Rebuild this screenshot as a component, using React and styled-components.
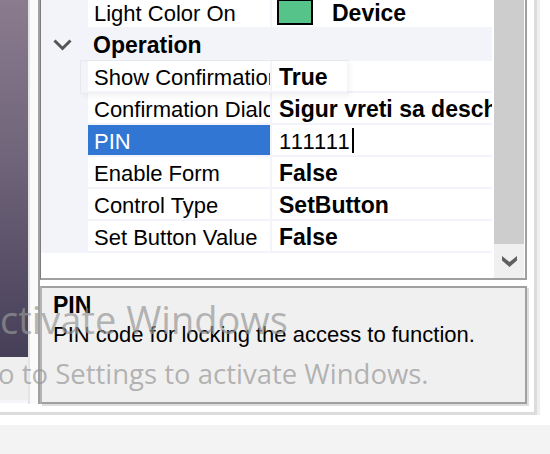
import React from "react";
import styled, { createGlobalStyle, css } from "styled-components";

const LINE = "#f3f4f9";

const Global = createGlobalStyle`
  *, *::before, *::after { box-sizing: border-box; }
  html, body { margin: 0; padding: 0; background: #fff; }
  body {
    width: 550px; height: 454px; overflow: hidden;
    font-family: "Liberation Sans", Arial, sans-serif;
    color: #000;
  }
`;

const Page = styled.div`
  position: relative;
  width: 550px;
  height: 454px;
  overflow: hidden;
  background: #fff;
  display: flex;
  flex-direction: column;
`;

const Frame = styled.div`
  width: 537px;
  height: 415px;
  flex: none;
  display: flex;
  border-right: 3px solid #dcdcdc;
  border-bottom: 3px solid #dcdcdc;
  box-shadow: 3px 0 0 #efefef;
`;

const LeftPanel = styled.div`
  width: 28px;
  flex: none;
  display: flex;
  flex-direction: column;
`;

const Preview = styled.div`
  height: 357px;
  background: linear-gradient(to bottom, #8b7b8f 0%, #6f6479 45%, #463f58 100%);
`;

const PreviewFooter = styled.div`
  height: 43px;
  background: #efeff0;
`;

const PreviewEdge = styled.div`
  height: 3px;
  background: #f4f6fb;
`;

const Splitter = styled.div`
  width: 12px;
  height: 404px;
  flex: none;
  background: #fafafa;
  border-left: 2px solid #e4e4e4;
  border-right: 2px solid #a0a0a0;
`;

const PropertyGrid = styled.div`
  width: 487px;
  flex: none;
  display: flex;
  flex-direction: column;
`;

const GridView = styled.div`
  height: 280px;
  display: flex;
  background: #fff;
  border-left: 1px solid #7c7c7c;
  border-right: 2px solid #a0a0a0;
  border-bottom: 2px solid #a0a0a0;
`;

const PropertyList = styled.div`
  width: 451px;
  height: 278px;
  overflow: hidden;
  background: #fff;
`;

const Rows = styled.div`
  display: flex;
  flex-direction: column;
  gap: 2px;
  margin-top: -3px;
  padding-bottom: 2px;
  background: ${LINE};
`;

const PropRow = styled.div`
  display: grid;
  grid-template-columns: 45px 182px 222px;
  column-gap: 2px;
  height: 30px;
`;

const MarginCell = styled.div``;

const Cell = styled.div`
  background: #fff;
  overflow: hidden;
  white-space: nowrap;
  font-size: 22px;
  line-height: 33px;
`;

const LabelCell = styled(Cell)`
  padding-left: 6px;
  ${(p) =>
    p.$selected &&
    css`
      background: #3176d2;
      color: #fff;
    `}
`;

const ValueCell = styled(Cell)`
  display: flex;
  align-items: flex-start;
  padding-left: 5px;
  font-weight: ${(p) => (p.$bold ? 700 : 400)};
  font-size: ${(p) => (p.$bold ? "23px" : "22px")};
`;

const ValueText = styled.span`
  padding-left: 2px;
  flex: none;
`;

const EditText = styled.span`
  padding-left: 2px;
  letter-spacing: 1.1px;
  flex: none;
`;

const Caret = styled.span`
  width: 2px;
  height: 25px;
  margin-top: 3px;
  margin-left: 1px;
  background: #000;
  flex: none;
`;

const Swatch = styled.span`
  width: 36px;
  height: 26px;
  margin-top: 2px;
  margin-right: 17px;
  flex: none;
  background: ${(p) => p.$color};
  border: 2px solid #000;
`;

const CategoryRow = styled.div`
  height: 30px;
  display: flex;
  align-items: flex-start;
  font-size: 23px;
  font-weight: 700;
  line-height: 33px;
`;

const ExpandIcon = styled.svg`
  margin-left: 12px;
  margin-top: 10px;
  flex: none;
`;

const CategoryText = styled.span`
  margin-left: 21px;
`;

const Filler = styled.div`
  flex: 1;
  background: #fff;
`;

const Scrollbar = styled.div`
  width: 30px;
  margin-left: 2px;
  display: flex;
  flex-direction: column;
  background: #f0f0f0;
`;

const Thumb = styled.div`
  flex: 1;
  background: #cdcdcd;
`;

const ArrowButton = styled.div`
  height: 34px;
  display: flex;
  align-items: center;
  justify-content: center;
  padding-left: 1px;
`;

const Gap = styled.div`
  height: ${(p) => p.$h}px;
  flex: none;
`;

const DescPanel = styled.div`
  height: 118px;
  background: #f0f0f0;
  border: 2px solid #a0a0a0;
  border-left-color: #b4b4b4;
  box-shadow: 2px 2px 0 #dedede;
  padding: 4px 0 0 11px;
`;

const DescTitle = styled.div`
  font-size: 23px;
  font-weight: 700;
  line-height: 26px;
`;

const DescText = styled.div`
  font-size: 22px;
  line-height: 26px;
  margin-top: 4px;
  white-space: nowrap;
`;

const BottomBar = styled.div`
  flex: 1;
  background: #f3f3f3;
`;

const GhostTip = styled.div`
  position: absolute;
  left: 80px;
  top: 60px;
  width: 268px;
  height: 34px;
  border: 1px solid rgba(0, 0, 0, 0.045);
  box-shadow: 3px 3px 4px rgba(0, 0, 0, 0.04);
  pointer-events: none;
`;

const Watermark = styled.div`
  position: absolute;
  left: 0;
  top: 300px;
  pointer-events: none;
  font-family: "Open Sans", "Noto Sans", sans-serif;
  color: rgba(150, 150, 150, 0.7);
  white-space: nowrap;
`;

const WatermarkTitle = styled.div`
  font-size: 38px;
  line-height: 38px;
  margin-left: -24px;
`;

const WatermarkHint = styled.div`
  font-size: 27.5px;
  line-height: 27px;
  margin-top: 22px;
  margin-left: -22px;
`;

const rows = [
  { kind: "prop", label: "Light Color On", value: "Device", swatch: "#55c38a", bold: true },
  { kind: "cat", label: "Operation" },
  { kind: "prop", label: "Show Confirmation", value: "True", bold: true },
  { kind: "prop", label: "Confirmation Dialog Text", value: "Sigur vreti sa deschideti?", bold: true },
  { kind: "prop", label: "PIN", value: "111111", selected: true, editing: true },
  { kind: "prop", label: "Enable Form", value: "False", bold: true },
  { kind: "prop", label: "Control Type", value: "SetButton", bold: true },
  { kind: "prop", label: "Set Button Value", value: "False", bold: true },
];

function Row({ row }) {
  if (row.kind === "cat") {
    return (
      <CategoryRow>
        <ExpandIcon width="19" height="13" viewBox="0 0 19 13">
          <polyline
            points="1.5,1.5 9.5,9.5 17.5,1.5"
            fill="none"
            stroke="#555"
            strokeWidth="3"
          />
        </ExpandIcon>
        <CategoryText>{row.label}</CategoryText>
      </CategoryRow>
    );
  }
  return (
    <PropRow>
      <MarginCell />
      <LabelCell $selected={row.selected}>{row.label}</LabelCell>
      <ValueCell $bold={row.bold}>
        {row.swatch && <Swatch $color={row.swatch} />}
        {row.editing ? (
          <>
            <EditText>{row.value}</EditText>
            <Caret />
          </>
        ) : (
          <ValueText>{row.value}</ValueText>
        )}
      </ValueCell>
    </PropRow>
  );
}

export default function App() {
  return (
    <Page>
      <Global />
      <Frame>
        <LeftPanel>
          <Preview />
          <PreviewFooter />
          <PreviewEdge />
        </LeftPanel>
        <Splitter />
        <PropertyGrid>
          <GridView>
            <PropertyList>
              <Rows>
                {rows.map((r, i) => (
                  <Row key={i} row={r} />
                ))}
              </Rows>
              <Filler />
            </PropertyList>
            <Scrollbar>
              <Thumb />
              <ArrowButton>
                <svg width="15" height="11" viewBox="0 0 15 11">
                  <polygon points="0,0 7.5,6 15,0 15,4.5 7.5,11 0,4.5" fill="#606060" />
                </svg>
              </ArrowButton>
            </Scrollbar>
          </GridView>
          <Gap $h={6} />
          <DescPanel>
            <DescTitle>PIN</DescTitle>
            <DescText>PIN code for locking the access to function.</DescText>
          </DescPanel>
        </PropertyGrid>
      </Frame>
      <Gap $h={10} />
      <BottomBar />
      <GhostTip />
      <Watermark>
        <WatermarkTitle>Activate Windows</WatermarkTitle>
        <WatermarkHint>Go to Settings to activate Windows.</WatermarkHint>
      </Watermark>
    </Page>
  );
}
